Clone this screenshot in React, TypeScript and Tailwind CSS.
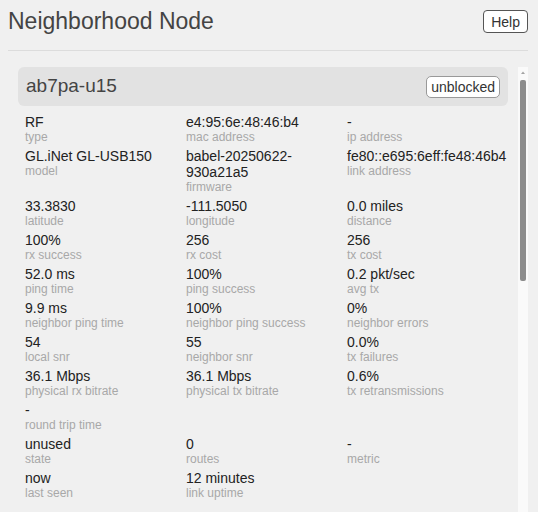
import React from "react";

type Field = {
  value: string;
  label: string;
};

const fields: Field[] = [
  { value: "RF", label: "type" },
  { value: "e4:95:6e:48:46:b4", label: "mac address" },
  { value: "-", label: "ip address" },
  { value: "GL.iNet GL-USB150", label: "model" },
  { value: "babel-20250622-930a21a5", label: "firmware" },
  { value: "fe80::e695:6eff:fe48:46b4", label: "link address" },
  { value: "33.3830", label: "latitude" },
  { value: "-111.5050", label: "longitude" },
  { value: "0.0 miles", label: "distance" },
  { value: "100%", label: "rx success" },
  { value: "256", label: "rx cost" },
  { value: "256", label: "tx cost" },
  { value: "52.0 ms", label: "ping time" },
  { value: "100%", label: "ping success" },
  { value: "0.2 pkt/sec", label: "avg tx" },
  { value: "9.9 ms", label: "neighbor ping time" },
  { value: "100%", label: "neighbor ping success" },
  { value: "0%", label: "neighbor errors" },
  { value: "54", label: "local snr" },
  { value: "55", label: "neighbor snr" },
  { value: "0.0%", label: "tx failures" },
  { value: "36.1 Mbps", label: "physical rx bitrate" },
  { value: "36.1 Mbps", label: "physical tx bitrate" },
  { value: "0.6%", label: "tx retransmissions" },
  { value: "-", label: "round trip time" },
  { value: "", label: "" },
  { value: "", label: "" },
  { value: "unused", label: "state" },
  { value: "0", label: "routes" },
  { value: "-", label: "metric" },
  { value: "now", label: "last seen" },
  { value: "12 minutes", label: "link uptime" },
];

function Stat({ value, label }: Field) {
  if (!value && !label) return <div />;
  return (
    <div className="mb-1 break-words">
      <div className="text-[14px] leading-4 text-[#222]">{value}</div>
      <div className="text-[12px] leading-[14px] text-[#a8a8a8]">{label}</div>
    </div>
  );
}

// headless browser hides native scrollbars, so draw one
function Scrollbar() {
  return (
    <div className="flex w-[10px] shrink-0 flex-col items-center bg-[#fafafa]">
      <svg width="10" height="10" viewBox="0 0 10 10" className="mt-[1px]">
        <path d="M3 6 L5 3.5 L7 6 Z" fill="#a3a3a3" />
      </svg>
      <div className="mt-[2px] h-[201px] w-[6px] rounded-[2px] bg-[#8c8c8c]" />
    </div>
  );
}

export default function App() {
  return (
    <div className="flex h-screen flex-col bg-[#f0f0f0] pl-2 pr-[10px] pt-2 font-['Liberation_Sans',Arial,sans-serif]">
      <div className="flex items-start justify-between">
        <h1 className="text-[23px] leading-[26px] text-[#444]">Neighborhood Node</h1>
        <button className="mt-[2px] h-[23px] rounded-[4px] border border-[#555] bg-white px-[7px] text-[14px] leading-none text-[#333]">
          Help
        </button>
      </div>
      <hr className="mt-4 border-t border-[#dcdcdc]" />

      <div className="mt-4 flex min-h-0 flex-1">
        <div className="min-w-0 flex-1 overflow-hidden pl-[10px] pr-[10px]">
          <div className="flex h-[39px] items-center justify-between rounded-[6px] bg-[#e2e2e2] pl-2 pr-2">
            <div className="text-[19px] text-[#444]">ab7pa-u15</div>
            <button className="h-[22px] rounded-[5px] border border-[#999] bg-white px-[4px] text-[14px] leading-none text-[#333]">
              unblocked
            </button>
          </div>

          <div className="mt-2 grid grid-cols-3 pl-[7px]">
            {fields.map((f, i) => (
              <Stat key={i} value={f.value} label={f.label} />
            ))}
          </div>
        </div>
        <Scrollbar />
      </div>
    </div>
  );
}
